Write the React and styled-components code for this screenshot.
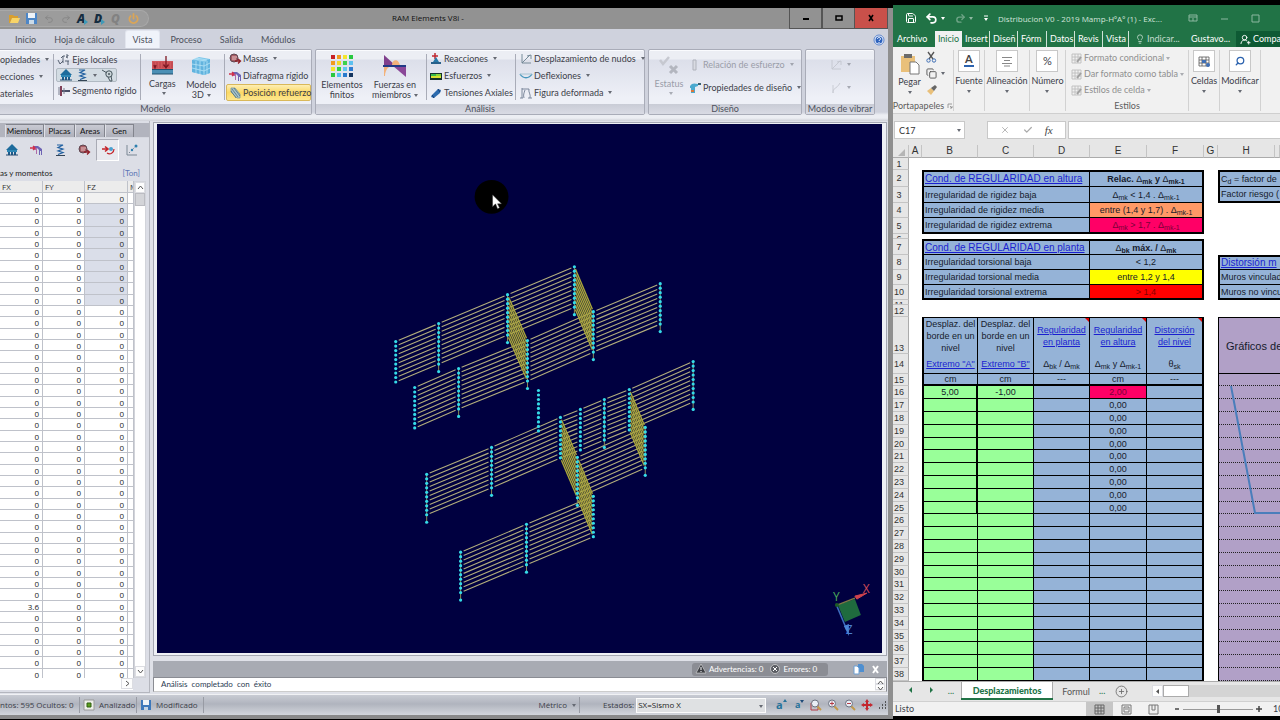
import React from 'react';
import styled, { createGlobalStyle, css } from 'styled-components';
import { Save, Undo2, Redo2, Copy, Search, Lightbulb, UserRoundPlus, X, Check, CirclePlus, Power } from 'lucide-react';

const Global = createGlobalStyle`
  *, *::before, *::after { box-sizing: border-box; }
  body { margin: 0; background: #000; color: #3c4049; font: 9px/10px Lato, "Open Sans", sans-serif; }
  button, input, select { font: inherit; color: inherit; margin: 0; padding: 0; border: 0; background: none; border-radius: 0; }
  svg { display: block; flex: none; }
  table { border-collapse: separate; border-spacing: 0; table-layout: fixed; }
  td, th { padding: 0; font-weight: 400; }
`;

const Desktop = styled.div`
  display: grid;
  grid-template-columns: minmax(0, 893fr) minmax(0, 387fr);
  height: 100vh;
  overflow: hidden;
`;

/* ---------- shared ---------- */

const Caret = styled.span`
  display: inline-block;
  flex: none;
  width: 0;
  height: 0;
  border: 2px solid transparent;
  border-top: 3px solid #666a73;
  border-bottom: 0;
  opacity: ${p => (p.$dim ? 0.5 : 1)};
`;

const Icon = ({ w = 12, h, box, children }) => (
  <svg width={w} height={h || w} viewBox={box || `0 0 ${w} ${h || w}`} overflow="visible" aria-hidden="true">{children}</svg>
);

/* ---------- RAM Elements window ---------- */

const RamWindow = styled.section`
  display: flex;
  flex-direction: column;
  min-width: 0;
  min-height: 0;
  margin: 8px 0 1px;
  background: #dfe1e8;
  border-right: 5px solid #8f8f8f;
  border-bottom: 4px solid #8a8a8a;
  overflow: hidden;
`;

const TitleBar = styled.header`
  display: flex;
  height: 21px;
  flex: none;
  background: #929292;
`;

const QuickAccess = styled.div`
  display: flex;
  align-items: center;
  gap: 6px;
  width: 149px;
  height: 17px;
  margin-top: 2px;
  padding-left: 9px;
  border: 1px solid #a8a8a8;
  border-left: 0;
  border-radius: 0 9px 9px 0;
  background: #9c9c9c;
`;

const QuickButton = styled.button`
  display: flex;
  align-items: center;
  justify-content: center;
  width: 11px;
  height: 12px;
  color: ${p => p.$color || '#848484'};
  font: italic 800 12px/12px "Open Sans", sans-serif;
`;

const WindowTitle = styled.h1`
  flex: 1;
  margin: 0;
  padding-right: 82px;
  text-align: center;
  color: #111;
  font: 400 8px/20px "Open Sans", sans-serif;
`;

const WindowButton = styled.button`
  display: grid;
  place-items: center;
  width: 33px;
  border: 1px solid #555;
  border-top: 0;
  border-left-width: ${p => (p.$close ? 0 : 1)}px;
  background: ${p => (p.$close ? '#c9504a' : '#929292')};
`;

const RamTabs = styled.nav`
  display: flex;
  align-items: stretch;
  gap: 4px;
  flex: none;
  height: 19px;
  padding: 2px 3px 0 8px;
  background: #cfd2dd;
`;

const RamTab = styled.button`
  padding: 0 7px;
  color: #4d515c;
  border-radius: 2px 2px 0 0;
  ${p => p.$active && css`
    background: #f0f3fa;
    box-shadow: 0 0 0 1px #e2e5ee;
  `}
`;

const HelpButton = styled.button`
  display: grid;
  place-items: center;
  margin-left: auto;
`;

const RamRibbon = styled.div`
  display: flex;
  gap: 3px;
  flex: none;
  height: 73px;
  padding-top: 1px;
  background: linear-gradient(#cfd2dd 0 64px, #eceef3 67px 70px, #cfd1d8 73px);
`;

const RibbonGroup = styled.section`
  display: flex;
  flex-direction: column;
  width: ${p => p.$w}px;
  height: 66px;
  border: 1px solid #a9acb8;
  border-left-width: ${p => (p.$first ? 0 : 1)}px;
  border-radius: ${p => (p.$first ? '0 2px 2px 0' : '2px')};
  background: linear-gradient(#eceef4 0 9px, #dcdfea 10px, #eef0f7 48px, #eef0f7);
  box-shadow: inset 0 1px #fafbfe;
`;

const GroupBody = styled.div`
  display: flex;
  height: 54px;
  padding-left: ${p => p.$pad || 0}px;
`;

const GroupCaption = styled.h2`
  margin: 0;
  flex: 1;
  text-align: center;
  font-size: 9px;
  font-weight: 400;
  line-height: 9px;
  color: #4d515c;
  background: linear-gradient(#c9ccd6, #d9dbe4);
`;

const Stack = styled.div`
  display: flex;
  flex-direction: column;
  justify-content: ${p => (p.$two ? 'space-evenly' : 'flex-start')};
  width: ${p => p.$w}px;
  height: 52px;
  ${p => p.$line && css`
    border-right: 1px solid #a9acb8;
    margin-right: ${p.$gap || 2}px;
    height: 46px;
    margin-top: 4px;
    & > * { position: relative; top: -3px; }
  `}
`;

const Command = styled.button`
  display: flex;
  align-items: center;
  gap: 2px;
  height: 17px;
  flex: none;
  padding-left: ${p => p.$pad || 0}px;
  white-space: nowrap;
  color: ${p => (p.$dim ? '#9a9da8' : '#3c4049')};
  ${Caret} { margin-left: 3px; }
  ${p => p.$active && css`
    border: 1px solid #d9b85a;
    border-radius: 2px;
    background: linear-gradient(#fdeeb4, #fbd966 50%, #fde78e);
  `}
`;

const ToggleStrip = styled.div`
  display: flex;
  align-items: center;
  justify-content: space-around;
  align-self: flex-start;
  width: 61px;
  height: 17px;
  border: 1px solid #b0b9c2;
  border-radius: 2px;
  background: #d3dce3;
`;

const IconButton = styled.button`
  display: grid;
  place-items: center;
  flex: none;
`;

const BigCommand = styled.button`
  display: flex;
  flex-direction: column;
  align-items: center;
  width: ${p => p.$w}px;
  height: 52px;
  padding-top: 5px;
  text-align: center;
  color: ${p => (p.$dim ? '#9a9da8' : '#3c4049')};
  svg { margin-bottom: 3px; }
  ${Caret} { margin: 3px 0 1px 3px; }
`;

const Workspace = styled.div`
  display: grid;
  grid-template-columns: 150px minmax(0, 1fr);
  flex: 1;
  min-height: 0;
`;

const SidePanel = styled.aside`
  display: flex;
  flex-direction: column;
  min-height: 0;
  padding-top: 2px;
  margin-bottom: 1px;
  border-right: 1px solid #b4b6be;
  border-bottom: 1px solid #b4b6be;
  background: #dcdee6;
`;

const SideTabs = styled.div`
  display: flex;
  align-items: flex-end;
  height: 15px;
  flex: none;
  padding-left: 5px;
  background: #b2b4be;
  border-bottom: 1px solid #d5d7df;
  font-size: 8px;
`;

const SideTab = styled.button`
  flex: none;
  width: ${p => p.$w}px;
  height: 13px;
  color: #111;
  border: 1px solid #82848d;
  border-left-color: #e0e1e8;
  border-bottom: 0;
  background: linear-gradient(#c9cad3, #aeb0ba);
`;

const SideTools = styled.div`
  display: flex;
  align-items: center;
  gap: 1px;
  height: 24px;
  flex: none;
`;

const SideTool = styled(IconButton)`
  width: 23px;
  height: 22px;
  ${p => p.$active && css`
    border: 1px solid #a9abb5;
    border-right-color: #fff;
    border-bottom-color: #fff;
    background: #e8e9ef;
  `}
`;

const SideCaption = styled.div`
  display: flex;
  justify-content: space-between;
  height: 19px;
  flex: none;
  padding: 6px 9px 0 0;
  font-size: 8px;
  color: #222;
  span + span { color: #5b74b5; }
`;

const GridArea = styled.div`
  display: flex;
  flex: 1;
  min-height: 0;
  margin-right: 3px;
  background: #fff;
`;

const GridClip = styled.div`
  flex: 1;
  min-width: 0;
  overflow: hidden;
`;

const ForceTable = styled.table`
  width: 100%;
  font-family: "Open Sans", sans-serif;
  font-size: 8px;
  th { height: 12px; padding-left: 2px; text-align: left; background: #ececec; color: #333; line-height: 9px; overflow: hidden; }
  td { height: 11px; padding-right: 3px; text-align: right; color: #222; line-height: 9px; }
  tr:nth-child(3n) td { height: 12px; }
  th, td { border-right: 1px solid #bfc2ca; border-bottom: 1px solid #bfc2ca; }
`;

const ForceCell = styled.td`
  background: ${p => (p.$shade === 2 ? '#dadee9' : p.$shade === 1 ? '#f1f1f1' : '#fff')};
`;

const VScroll = styled.div`
  display: flex;
  flex-direction: column;
  width: 12px;
  border: 1px solid #d2d4da;
  background: #fff;
  button:last-child { margin-top: auto; }
`;

const ScrollButton = styled.button`
  display: grid;
  place-items: center;
  width: ${p => p.$w || 10}px;
  height: ${p => p.$h || 11}px;
  border: 1px solid #dcdde2;
  background: #fdfdfd;
`;

const ScrollThumb = styled.div`
  height: 13px;
  background: #d3d4d8;
  border: 1px solid #bbbcc2;
`;

const HScroll = styled.div`
  display: flex;
  justify-content: flex-end;
  height: 12px;
  flex: none;
  margin: 0 16px 2px 0;
  background: #fff;
`;

const MainPanel = styled.main`
  display: flex;
  flex-direction: column;
  min-height: 0;
  padding: 1px 1px 2px 3px;
`;

const CanvasFrame = styled.div`
  flex: 1;
  min-height: 0;
  padding: 1px 4px 2px 3px;
  border: 1px solid #a5a8b2;
  background: #eef0f5;
`;

const ModelCanvas = styled.svg`
  width: 100%;
  height: 100%;
  background: #000040;
`;

const MessageBar = styled.div`
  display: flex;
  align-items: center;
  flex: none;
  height: 16px;
  margin-top: 5px;
  padding-right: 6px;
  background: #a8abb3;
  color: #fff;
  font-size: 8px;
`;

const Counters = styled.div`
  display: flex;
  align-items: center;
  gap: 3px;
  width: 136px;
  height: 13px;
  margin: 0 19px 0 auto;
  padding-left: 4px;
  border-radius: 3px;
  background: #8b8d94;
  white-space: nowrap;
  span { margin-right: 4px; }
`;

const BarButton = styled(IconButton)`
  margin-left: 6px;
`;

const MessageLog = styled.div`
  display: flex;
  justify-content: space-between;
  flex: none;
  height: 15px;
  padding-left: 7px;
  border: 1px solid #8a8c93;
  border-bottom-color: #ccc;
  background: #fff;
  color: #2c3c52;
  font-size: 8px;
  line-height: 13px;
`;

const Spinner = styled.div`
  width: 11px;
  background: #f2f2f4;
`;

const StatusBar = styled.footer`
  display: flex;
  align-items: center;
  flex: none;
  height: 21px;
  border-top: 1px solid #f0f1f4;
  background: linear-gradient(#c8cbd3, #b0b4be 45%, #d3d6dc);
  font: 8px/10px "Open Sans", sans-serif;
`;

const StatusItem = styled.div`
  display: flex;
  align-items: center;
  justify-content: ${p => (p.$end ? 'flex-end' : 'flex-start')};
  gap: 5px;
  height: 16px;
  width: ${p => p.$w}px;
  padding: 0 ${p => (p.$end ? 3 : 0)}px 0 ${p => p.$pad || 0}px;
  border-right: 1px solid #989ba4;
  white-space: nowrap;
`;

const StateField = styled.label`
  display: flex;
  align-items: center;
  gap: 2px;
  padding-left: 23px;
`;

const StateSelect = styled.select`
  width: 130px;
  height: 15px;
  padding: 0 1px;
  border: 1px solid #fbfbfb;
  background: #dfe1e3;
  color: #222;
  appearance: none;
`;

const SelectWrap = styled.span`
  position: relative;
  display: flex;
  ${Caret} { position: absolute; right: 3px; top: 7px; }
`;

const ViewTools = styled.div`
  display: flex;
  align-items: center;
  gap: 5px;
  margin-left: auto;
  padding-right: 1px;
`;

/* ---------- RAM icons ---------- */

const House = () => (
  <Icon w={12}><path d="M6 0 12 6H0Z" fill="#1d6b9c" /><path d="M1 6h10v2H1z" fill="#2d87b5" /><path d="M2 8h2v3H2zM5 8h2v3H5zM8 8h2v3H8z" fill="#1c5c8c" /><path d="M0 11h12" stroke="#244a70" /></Icon>
);
const Spring = () => (
  <Icon w={12}><path d="M3 1h6L4 3.500 9 5 4 7l5 1.500L4 10.500" fill="none" stroke="#1f5fa0" strokeWidth="1.200" /><path d="M2 11.500h9" stroke="#345" /></Icon>
);
const Pin = () => (
  <Icon w={12}><circle cx="7" cy="5" r="3.200" fill="#c9d4d8" stroke="#47565e" /><circle cx="7" cy="5" r="1" fill="#47565e" /><path d="m0 1 5 3M9 7l1 5M6 8l2 4h2" fill="none" stroke="#47565e" /></Icon>
);
const Axes = () => (
  <Icon w={12}><path d="m0 6 2 4 3-3M5 9V2h2M5 2 3 4M8 1h2v1L8 3l2 1M7 7h4M10 7v4" stroke="#4b5566" fill="none" strokeWidth=".9" /></Icon>
);
const Segment = () => (
  <Icon w={12}><path d="M3 1v10" stroke="#803f58" strokeWidth="2" /><path d="M4 6h8" stroke="#4b5068" strokeWidth="2" /><path d="M1 2v8M6 3v6" stroke="#7a7f90" /></Icon>
);
const Mass = () => (
  <Icon w={12}><circle cx="5" cy="5" r="4" fill="#a65c64" stroke="#5d4650" /><path d="M3 4h5M3 6h4" stroke="#e9c5c5" /><path d="M6 8h5M9 6l2.500 2L9 10.500" fill="none" stroke="#8f1f28" strokeWidth="1.300" /></Icon>
);
const Diaphragm = () => (
  <Icon w={12}><path d="M3 2h5l4 3v6h-1V7h-1v4H9V6L7 4H3z" fill="#6d63b4" /><path d="M3 4h4v6H6V6H3z" fill="#b06aa8" /><path d="M0 4h5M3 2l2 2-2 2" fill="none" stroke="#d1304a" strokeWidth="1.300" /></Icon>
);
const Rebar = () => (
  <Icon w={12}><path d="M2 1 6 1 11 7v4H8L2 5Z" fill="#a8c4cc" stroke="#6f8e96" strokeWidth=".7" /><path d="m3 2 6 8M5 1l6 8M2 4l5 7" stroke="#50727e" strokeWidth=".8" /></Icon>
);
const LoadsBig = () => (
  <Icon w={23} h={21}><rect x="1" y="6" width="21" height="8" fill="#d2575c" /><path d="M3 7v6M6 7v6M9 7v6M12 7v6M18 7v6M21 7v6" stroke="#b03a45" strokeWidth=".8" /><path d="M15 1v11M12.500 9.500 15 13l2.500-3.500M3 10l1 3 1-3" stroke="#7d1722" strokeWidth="1.300" fill="none" /><rect x="1" y="14" width="21" height="5" fill="#4b8fb5" /><path d="M1 14.500h21M1 19h21" stroke="#22506e" /></Icon>
);
const ModelBig = () => (
  <Icon w={22} h={22}><path d="m2 5 7-3 11 2v14l-6 2-12-3Z" fill="#7fc7ea" /><path d="m2 5 12 2 6-3v14l-6 2-12-3Z" fill="#62b3de" /><path d="M14 7v13M6 6v12M10 6v13M17 6v13M2 9l12 2 6-3M2 13l12 3 6-3M6 3l11 2M4 4l12 2" stroke="#b7e5f8" strokeWidth=".8" fill="none" /></Icon>
);
const tileColors = ['#c71f24', '#f19a20', '#f4e52b', '#28c840', '#f19a20', '#f4d92b', '#3ed14a', '#5cc0f0', '#f4e52b', '#35d043', '#63c6ee', '#2f7bd0', '#2cc840', '#58bdf0', '#2879cc', '#13345f'];
const TilesBig = () => (
  <Icon w={22} h={22}>{tileColors.map((c, i) => <rect key={i} x={(i % 4) * 6} y={Math.floor(i / 4) * 6} width="4" height="4" fill={c} />)}</Icon>
);
const ForcesBig = () => (
  <Icon w={24} h={22}><path d="M1 0v11h12Z" fill="#7f3f8c" /><path d="M23 22V11H10Z" fill="#8a4798" /><path d="M9 10c0-6 7-7 8 1H9Z" fill="#f3b27a" /><path d="M1 12h5c-3 2-4 6-4 9H1Z" fill="#f3b27a" /><path d="M0 11h23" stroke="#213a86" strokeWidth="2" /></Icon>
);
const Reactions = () => (
  <Icon w={12}><path d="M5 0v6M2 3h6" stroke="#c0282f" strokeWidth="1.500" /><path d="m6 4 3 5H3Z" fill="#2778a8" /><path d="M1 10h10" stroke="#27608a" strokeWidth="2" /></Icon>
);
const Stress = () => (
  <Icon w={12}><rect y="3" width="12" height="7" fill="#15302a" /><path d="M1 4h10v2H1z" fill="#37b94a" /><path d="M1 6h10v2H1z" fill="#d9e02f" /><path d="M6 4h5v2H6z" fill="#8ad63a" /></Icon>
);
const Axial = () => (
  <Icon w={12}><path d="m2 8 6-6 3 1-1 3-6 5-3-1Z" fill="#2c6bae" /><path d="m2 8 2 3M8 2l2 3" stroke="#153d73" /></Icon>
);
const Displace = ({ c = '#6b8190' }) => (
  <Icon w={12}><path d="M2 1v9h9M2 10l8-8M7 3l4-1v4" fill="none" stroke={c} strokeWidth=".9" /></Icon>
);
const DisplaceDots = () => (
  <Icon w={12}><path d="M1 1v10h10" fill="none" stroke="#7b8794" /><path d="m3 9 6-6" stroke="#7b8794" strokeDasharray="1.500 1.500" /><circle cx="10" cy="2" r="1.500" fill="#2d7fae" /><circle cx="6" cy="6" r="1.200" fill="#2d7fae" /></Icon>
);
const Deflect = () => (
  <Icon w={12}><path d="M0 4c3 5 9 5 12 0" fill="none" stroke="#4797bd" strokeWidth="1.400" /><path d="M0 4h12" stroke="#a8c3d2" /></Icon>
);
const Deformed = () => (
  <Icon w={12}><path d="M2 1v10M2 2h7M9 2c-1 3 2 5 1 9M5 3c-1 3-2 5-1 8M0 11h3M8 11h4" fill="none" stroke="#6f7d92" strokeWidth=".9" /></Icon>
);
const StatusBig = () => (
  <Icon w={22} h={21}><path d="m2 5 3 4 6-7" fill="none" stroke="#c6c8d0" strokeWidth="2.500" /><path d="m12 11 7 7m0-7-7 7" stroke="#b3b6bf" strokeWidth="3" /></Icon>
);
const Ratio = () => <Icon w={12}><path d="M4 1h3v10H4z" fill="#d9dbe2" stroke="#b0b3bc" /></Icon>;
const Drill = () => (
  <Icon w={12}><path d="M1 4c2-3 4-3 8-2v2L6 5v6H2V6H1Z" fill="#4aa9cf" /><path d="M9 1h3v2H9z" fill="#3b6070" /><path d="M2 8h3v2H2z" fill="#d9773b" /></Icon>
);
const ForceArrow = () => (
  <Icon w={14} h={12}><path d="M1 5h5M4 2.500 7 5 4 7.500" fill="none" stroke="#c4252b" strokeWidth="1.600" /><circle cx="10" cy="5" r="2" fill="#4aa0cf" /><path d="M6 9c3 2 7 0 7-4" fill="none" stroke="#c4252b" strokeWidth="1.200" /></Icon>
);
const Chevron = ({ d }) => <Icon w={7}><path d={d} fill="none" stroke="#555" strokeWidth="1" /></Icon>;
const UP = 'M1 5 3.500 2 6 5';
const DOWN = 'M1 2 3.500 5 6 2';
const RIGHT = 'M2 1 5 3.500 2 6';
const Magnifier = ({ sign, box }) => (
  <Icon w={12}>{box && <path d="M1 4h7v7H1z" fill="none" stroke="#b53a45" />}<path d="m7 7 4 4" stroke="#c39a4a" strokeWidth="2" /><circle cx="5" cy="4.500" r="3.500" fill="#e9eef5" stroke="#6d7280" />{sign && <path d={sign} stroke="#b53a45" />}</Icon>
);

/* ---------- 3D model ---------- */

const STEP = 4.5;
const columns = {
  A: [239, 218, 0], B: [282, 200, 1], C: [351, 171, 1], D: [418, 143, 1], E: [258, 264, 0], F: [302, 245, 1],
  G: [371, 217, 1], H: [437, 188, 1], I: [504, 160, 1], J: [382, 267, 0], K: [270, 351, 1], L: [335, 324, 1],
  M: [404, 294, 0], N: [424, 286, 0], O: [448, 276, 1], P: [473, 266, 0], Q: [537, 238, 1], R: [489, 304, 1],
  S: [421, 334, 1], T: [437, 373, 0], U: [370, 401, 1], V: [304, 429, 1],
};
const walls = ['AB', 'BC', 'CD', 'EF', 'FG', 'GH', 'HI', 'KL', 'LM', 'MN', 'NO', 'OP', 'PQ', 'SR', 'VU', 'UT'];
const crossWalls = ['CG', 'DH', 'MS', 'ST', 'PR'];
const levels = [...Array(10).keys()];

const Wall = ({ pair, inset, color, width }) => {
  const [a, b] = [columns[pair[0]], columns[pair[1]]];
  const slope = (b[1] - a[1]) / (b[0] - a[0]);
  return levels.map(i => (
    <line key={i} x1={a[0] + inset} y1={a[1] + i * STEP + slope * inset} x2={b[0] - inset} y2={b[1] + i * STEP - slope * inset} stroke={color} strokeWidth={width} />
  ));
};

const Model = () => (
  <ModelCanvas viewBox="0 0 726 530" role="img" aria-label="Modelo 3D">
    {walls.map(w => <Wall key={w} pair={w} inset={3} color="#b3ae7c" width={1.1} />)}
    {crossWalls.map(w => <Wall key={w} pair={w} inset={1} color="#aaa63a" width={1.4} />)}
    {Object.entries(columns).map(([k, [x, y, long]]) => (
      <g key={k} fill="#35dbe8">
        {long === 1 && <path d={`M${x} ${y}v47`} stroke="#8a8a58" />}
        {levels.map(i => <circle key={i} cx={x} cy={y + i * STEP} r="1.600" />)}
        {long === 1 && <circle cx={x} cy={y + 48} r="1.600" />}
      </g>
    ))}
    <circle cx="335" cy="73" r="17" fill="#000" />
    <path d="M336 71v12l3-3 2 5 2-1-2-4h4Z" fill="#fff" stroke="#333" strokeWidth=".5" />
    <path d="m682 482 17-6 6 16-16 7Z" fill="#1f6b3e" />
    <path d="m681 482 18-7" stroke="#7d7a45" strokeWidth="1.500" />
    <path d="m699 473 12-3-10 6Z" fill="#d0434d" stroke="#d0434d" />
    <path d="m681 483 10 24" stroke="#3e6fc0" strokeWidth="1.500" />
    <path d="m688 503 5-2v12Z" fill="#4a86d8" />
    <circle cx="681" cy="482" r="2" fill="#1d5a26" />
    <g fontFamily="Open Sans, sans-serif" fontSize="12">
      <text x="707" y="470" fill="#cf4a58">X</text>
      <text x="677" y="478" fill="#4cae5a">Y</text>
      <text x="690" y="511" fill="#4a7fd0">Z</text>
    </g>
  </ModelCanvas>
);

const ForceGrid = () => (
  <ForceTable>
    <colgroup><col style={{ width: 43 }} /><col style={{ width: 42 }} /><col style={{ width: 43 }} /><col /></colgroup>
    <thead><tr><th>FX</th><th>FY</th><th>FZ</th><th>M</th></tr></thead>
    <tbody>
      {[...Array(43).keys()].map(i => (
        <tr key={i}>
          <ForceCell>{i === 36 ? '3.6' : '0'}</ForceCell>
          <ForceCell>0</ForceCell>
          <ForceCell $shade={i === 0 ? 1 : i < 10 ? 2 : 0}>0</ForceCell>
          <ForceCell />
        </tr>
      ))}
    </tbody>
  </ForceTable>
);

const Play = () => <path d="m7 6 4 3-4 3Z" fill="#3f9ab8" />;

const Ram = () => (
  <RamWindow>
    <TitleBar>
      <QuickAccess>
        <QuickButton aria-label="Abrir"><Icon w={11}><path d="M0 2h4l1 1h4v2H3L1 10H0Z" fill="#d99f2e" /><path d="M3 5h8L9 10H1Z" fill="#f7d468" /></Icon></QuickButton>
        <QuickButton aria-label="Guardar"><Icon w={11}><path d="M0 0h11v11H0z" fill="#4d86c6" /><path d="M2 0h7v5H2z" fill="#eef3f8" /><path d="M3 7h5v4H3z" fill="#cbdbe9" /></Icon></QuickButton>
        <QuickButton aria-label="Deshacer"><Undo2 size={10} /></QuickButton>
        <QuickButton aria-label="Rehacer"><Redo2 size={10} /></QuickButton>
        <QuickButton aria-label="Analizar"><Icon w={12}><text x="0" y="10" fontSize="12" fill="#152c40">A</text><Play /></Icon></QuickButton>
        <QuickButton aria-label="Diseñar"><Icon w={12}><text x="0" y="10" fontSize="12" fill="#152c40">D</text><Play /></Icon></QuickButton>
        <QuickButton aria-label="Optimizar"><Icon w={12}><text x="0" y="10" fontSize="12" fill="#828282">Q</text></Icon></QuickButton>
        <QuickButton $color="#d9a558" aria-label="Salir"><Power size={11} strokeWidth={4} /></QuickButton>
      </QuickAccess>
      <WindowTitle>RAM Elements V8i -</WindowTitle>
      <WindowButton aria-label="Minimizar"><Icon w={8}><path d="M1 5h6" stroke="#000" strokeWidth="2" /></Icon></WindowButton>
      <WindowButton aria-label="Maximizar"><Icon w={8}><path d="M1 2h6v4H1z" fill="none" stroke="#000" strokeWidth="1.500" /></Icon></WindowButton>
      <WindowButton $close aria-label="Cerrar"><Icon w={8}><path d="m2 1 4 6M6 1 2 7" stroke="#000" strokeWidth="1.600" /></Icon></WindowButton>
    </TitleBar>

    <RamTabs>
      {['Inicio', 'Hoja de cálculo', 'Vista', 'Proceso', 'Salida', 'Módulos'].map(t => <RamTab key={t} $active={t === 'Vista'}>{t}</RamTab>)}
      <HelpButton aria-label="Ayuda"><Icon w={12}><circle cx="6" cy="6" r="5" fill="#e8effb" stroke="#5f86cc" /><circle cx="6" cy="6" r="3.500" fill="#2d62bd" /><path d="M4.500 5c0-2 3-2 3 0 0 1-1.500 1-1.500 2M6 8v1" stroke="#fff" fill="none" /></Icon></HelpButton>
    </RamTabs>

    <RamRibbon>
      <RibbonGroup $w={312} $first>
        <GroupBody>
          <Stack $w={55} $line>
            <Command>opiedades<Caret /></Command>
            <Command>ecciones<Caret /></Command>
            <Command>ateriales</Command>
          </Stack>
          <Stack $w={86} $line $gap={0}>
            <Command $pad={2}><Axes />Ejes locales</Command>
            <ToggleStrip>
              <IconButton aria-label="Apoyos"><House /></IconButton>
              <IconButton aria-label="Resortes"><Spring /></IconButton>
              <Caret />
              <IconButton aria-label="Articulaciones"><Pin /></IconButton>
            </ToggleStrip>
            <Command $pad={2}><Segment />Segmento rígido</Command>
          </Stack>
          <BigCommand $w={39}><LoadsBig />Cargas<Caret /></BigCommand>
          <BigCommand $w={40}><ModelBig />Modelo<span>3D<Caret /></span></BigCommand>
          <Stack $w={4} $line $gap={1} />
          <Stack $w={85}>
            <Command $pad={3}><Mass />Masas<Caret /></Command>
            <Command $pad={3}><Diaphragm />Diafragma rígido</Command>
            <Command $pad={2} $active><Rebar />Posición refuerzo</Command>
          </Stack>
        </GroupBody>
        <GroupCaption>Modelo</GroupCaption>
      </RibbonGroup>

      <RibbonGroup $w={330}>
        <GroupBody>
          <BigCommand $w={52}><TilesBig />Elementos<br />finitos</BigCommand>
          <BigCommand $w={54}><ForcesBig />Fuerzas en<span>miembros<Caret /></span></BigCommand>
          <Stack $w={5} $line $gap={3} />
          <Stack $w={85}>
            <Command><Reactions />Reacciones<Caret /></Command>
            <Command><Stress />Esfuerzos<Caret /></Command>
            <Command><Axial />Tensiones Axiales</Command>
          </Stack>
          <Stack $w={1} $line $gap={4} />
          <Stack $w={122}>
            <Command><Displace />Desplazamiento de nudos<Caret /></Command>
            <Command><Deflect />Deflexiones<Caret /></Command>
            <Command><Deformed />Figura deformada<Caret /></Command>
          </Stack>
        </GroupBody>
        <GroupCaption>Análisis</GroupCaption>
      </RibbonGroup>

      <RibbonGroup $w={154}>
        <GroupBody>
          <BigCommand $w={40} $dim><StatusBig />Estatus<Caret $dim /></BigCommand>
          <Stack $w={112} $two>
            <Command $dim><Ratio />Relación de esfuerzo<Caret $dim /></Command>
            <Command><Drill />Propiedades de diseño<Caret /></Command>
          </Stack>
        </GroupBody>
        <GroupCaption>Diseño</GroupCaption>
      </RibbonGroup>

      <RibbonGroup $w={70}>
        <GroupBody $pad={24}>
          <Stack $w={30} $two>
            <Command $dim aria-label="Modo"><Displace c="#c3c6cf" /><Caret $dim /></Command>
            <Command $dim aria-label="Animar"><Icon w={12}><path d="M3 11C3 5 6 8 10 1M3 3v8" fill="none" stroke="#c9ccd4" /></Icon><Caret $dim /></Command>
          </Stack>
        </GroupBody>
        <GroupCaption>Modos de vibrar</GroupCaption>
      </RibbonGroup>
    </RamRibbon>

    <Workspace>
      <SidePanel>
        <SideTabs>
          <SideTab $w={39}>Miembros</SideTab>
          <SideTab $w={31}>Placas</SideTab>
          <SideTab $w={30}>Areas</SideTab>
          <SideTab $w={29}>Gen</SideTab>
        </SideTabs>
        <SideTools>
          <SideTool aria-label="Apoyos"><House /></SideTool>
          <SideTool aria-label="Diafragma"><Diaphragm /></SideTool>
          <SideTool aria-label="Resortes"><Spring /></SideTool>
          <SideTool aria-label="Masas"><Mass /></SideTool>
          <SideTool $active aria-label="Fuerzas"><ForceArrow /></SideTool>
          <SideTool aria-label="Desplazamientos"><DisplaceDots /></SideTool>
        </SideTools>
        <SideCaption><span>as y momentos</span><span>[Ton]</span></SideCaption>
        <GridArea>
          <GridClip><ForceGrid /></GridClip>
          <VScroll>
            <ScrollButton aria-label="Subir"><Chevron d={UP} /></ScrollButton>
            <ScrollThumb />
            <ScrollButton aria-label="Bajar"><Chevron d={DOWN} /></ScrollButton>
          </VScroll>
        </GridArea>
        <HScroll><ScrollButton $w={12} aria-label="Derecha"><Chevron d={RIGHT} /></ScrollButton></HScroll>
      </SidePanel>

      <MainPanel>
        <CanvasFrame><Model /></CanvasFrame>
        <MessageBar>
          <Counters>
            <Icon w={10}><path d="m5 0 5 9H0Z" fill="#3d3f44" stroke="#ddd" strokeWidth=".6" /><path d="M5 3v3M5 7v1" stroke="#fff" /></Icon>
            <span>Advertencias: 0</span>
            <Icon w={10}><circle cx="5" cy="5" r="4.500" fill="#5b5d63" stroke="#ddd" strokeWidth=".7" /><path d="m3 3 4 4M7 3 3 7" stroke="#fff" /></Icon>
            <span>Errores: 0</span>
          </Counters>
          <BarButton aria-label="Copiar"><Icon w={11}><path d="M5 0h4l2 2v6H5z" fill="#4f8fd0" /><path d="M1 2h3l2 2v6H1z" fill="#fff" stroke="#6d9fd2" /></Icon></BarButton>
          <BarButton aria-label="Cerrar mensajes"><Icon w={11}><path d="m3 2 5 7M8 2 3 9" stroke="#fff" strokeWidth="2" /></Icon></BarButton>
        </MessageBar>
        <MessageLog>
          <span>Análisis&nbsp; completado&nbsp; con&nbsp; éxito</span>
          <Spinner><ScrollButton $h={6} aria-label="Anterior"><Chevron d={UP} /></ScrollButton><ScrollButton $h={6} aria-label="Siguiente"><Chevron d={DOWN} /></ScrollButton></Spinner>
        </MessageLog>
      </MainPanel>
    </Workspace>

    <StatusBar>
      <StatusItem $w={80}>ntos: 595 Ocultos: 0</StatusItem>
      <StatusItem $w={57} $pad={4}><Icon w={10}><path d="M0 0h10v10H0z" fill="#eef0e8" stroke="#999" /><path d="M3 3h4v4H3z" fill="#5d9e1e" stroke="#2f5e10" /></Icon>Analizado</StatusItem>
      <StatusItem $w={67} $pad={4}><Icon w={10}><path d="M0 0h10v10H0z" fill="#3d78bb" /><path d="M2 0h6v5H2z" fill="#edf2f8" /><path d="M3 7h4v3H3z" fill="#c4d4e5" /></Icon>Modificado</StatusItem>
      <StatusItem $w={376} $end>Métrico<Caret /></StatusItem>
      <StateField>Estados:
        <SelectWrap><StateSelect defaultValue="SX"><option value="SX">SX=Sismo X</option></StateSelect><Caret /></SelectWrap>
      </StateField>
      <ViewTools>
        <IconButton aria-label="Aumentar texto"><Icon w={12}><text x="0" y="10" fontSize="11" fontWeight="700" fill="#26729a">a</text><path d="m7 3 2-3 2 3Z" fill="#26729a" /></Icon></IconButton>
        <IconButton aria-label="Reducir texto"><Icon w={12}><text x="2" y="9" fontSize="9" fontWeight="700" fill="#26729a">a</text><path d="m7 1 2 3 2-3Z" fill="#1e4a78" /></Icon></IconButton>
        <IconButton aria-label="Zoom ventana"><Magnifier box /></IconButton>
        <IconButton aria-label="Acercar"><Magnifier sign="M3 4.500h4M5 2.500v4" /></IconButton>
        <IconButton aria-label="Alejar"><Magnifier sign="M3 4.500h4" /></IconButton>
        <IconButton aria-label="Mover"><Icon w={12}><path d="M6 0 8 3H7v2h2V4l3 2-3 2V7H7v2h1l-2 3-2-3h1V7H3v1L0 6l3-2v1h2V3H4Z" fill="#c3272f" /></Icon></IconButton>
        <Icon w={9}><path d="M7 1h1M7 4h1M4 4h1M7 7h1M4 7h1M1 7h1" stroke="#333" strokeWidth="1.500" /></Icon>
      </ViewTools>
    </StatusBar>
  </RamWindow>
);

/* ---------- Excel window ---------- */

const ExcelWindow = styled.section`
  display: flex;
  flex-direction: column;
  min-width: 0;
  min-height: 0;
  margin: 5px 0 4px;
  background: #e6e6e6;
  overflow: hidden;
`;

const ExcelTitle = styled.header`
  display: flex;
  align-items: center;
  height: 26px;
  flex: none;
  padding-left: 12px;
  background: #217346;
  color: #fff;
  ${Caret} { border-top-color: #fff; margin: 0 10px 0 3px; }
`;

const ExcelName = styled.h1`
  flex: none;
  width: 170px;
  margin: 2px 20px 0 9px;
  font: 400 8px/10px "Open Sans", sans-serif;
  white-space: nowrap;
  color: #d3e5db;
`;

const FrameButton = styled(IconButton)`
  margin-right: 22px;
  color: #8cb8a0;
`;

const ExcelTabs = styled.nav`
  display: flex;
  align-items: stretch;
  height: 16px;
  flex: none;
  background: #217346;
  color: #fff;
`;

const ExcelTab = styled.button`
  flex: none;
  width: ${p => p.$w}px;
  padding-left: ${p => (p.$active ? 0 : 4)}px;
  text-align: ${p => (p.$active ? 'center' : 'left')};
  white-space: nowrap;
  ${p => p.$line && css`border-right: 1px solid #cfe3d8; padding-left: 3px;`}
  ${p => p.$active && css`background: #f1f1f1; color: #217346;`}
`;

const TabAction = styled.button`
  display: flex;
  align-items: center;
  gap: 2px;
  flex: none;
  width: ${p => p.$w}px;
  padding-left: ${p => p.$pad || 0}px;
  white-space: nowrap;
  color: ${p => (p.$soft ? '#c4dccf' : '#fff')};
  background: ${p => (p.$dark ? '#0e5a34' : 'none')};
`;

const ExcelRibbon = styled.div`
  display: flex;
  flex: none;
  height: 67px;
  padding-top: 3px;
  border-bottom: 1px solid #cfcfcf;
  background: #f1f1f1;
`;

const ExcelGroup = styled.section`
  display: flex;
  flex-direction: column;
  align-items: center;
  flex: none;
  width: ${p => p.$w}px;
  height: 61px;
  border-right: 1px solid #d2d2d2;
`;

const TileButton = styled.button`
  display: flex;
  flex-direction: column;
  align-items: center;
  ${Caret} { margin-top: 4px; }
`;

const Tile = styled.span`
  display: grid;
  place-items: center;
  width: 22px;
  height: 22px;
  margin-bottom: 4px;
  border: 1px solid #c8c8c8;
  background: #fff;
  font-size: 11px;
`;

const Clipboard = styled.div`
  display: flex;
  width: 100%;
  height: 52px;
`;

const PasteButton = styled.button`
  display: flex;
  flex-direction: column;
  align-items: center;
  width: 33px;
  padding-top: 3px;
  svg { margin-bottom: 2px; }
  ${Caret} { margin-top: 4px; }
`;

const SmallColumn = styled.div`
  display: flex;
  flex-direction: column;
  justify-content: space-around;
  padding-bottom: 4px;
`;

const SmallTool = styled.button`
  display: flex;
  align-items: center;
  gap: 4px;
  color: #555;
`;

const GroupLabel = styled.span`
  display: flex;
  align-items: center;
  gap: 3px;
  margin-top: auto;
  height: 10px;
  color: #5d5d5d;
`;

const StyleButton = styled.button`
  display: flex;
  align-items: center;
  align-self: flex-start;
  gap: 2px;
  height: 16px;
  padding-left: 5px;
  white-space: nowrap;
  color: #8f8f8f;
`;

const FormulaBar = styled.div`
  display: flex;
  gap: 2px;
  flex: none;
  height: 31px;
  padding: 7px 0 0 1px;
`;

const NameBox = styled.label`
  position: relative;
  width: 71px;
  height: 18px;
  margin-right: 20px;
  ${Caret} { position: absolute; right: 4px; top: 8px; }
  input { width: 100%; height: 100%; padding-left: 4px; border: 1px solid #c8c8c8; background: #fff; color: #333; font-size: 9px; }
`;

const FormulaTools = styled.div`
  display: flex;
  align-items: center;
  justify-content: space-evenly;
  width: 79px;
  height: 18px;
  border: 1px solid #c8c8c8;
  background: #fff;
  color: #aaa;
  i { font: italic 11px/12px "Liberation Serif", serif; color: #444; }
`;

const FormulaInput = styled.input`
  flex: 1;
  min-width: 0;
  height: 18px;
  border: 1px solid #c8c8c8;
  border-right: 0;
  background: #fff;
`;

const SheetArea = styled.div`
  flex: 1;
  min-height: 0;
  overflow: hidden;
  background: #fff;
`;

const Sheet = styled.table`
  width: 100%;
  font: 9px/10px "Liberation Sans", Arial, sans-serif;
  color: #151b2c;
  td { white-space: nowrap; text-align: center; }
  sub { font-size: 7px; line-height: 0; vertical-align: -2px; }
  a { color: #1a1fd0; }
`;

const ColHead = styled.th`
  height: 13px;
  border-right: 1px solid #c4c4c4;
  border-bottom: 1px solid #ababab;
  background: #e6e6e6;
  color: #333;
  font-size: 10px;
`;

const SheetRow = styled.tr`
  height: ${p => p.$h}px;
`;

const RowHead = styled.th`
  vertical-align: ${p => (p.$h > 30 ? 'bottom' : 'middle')};
  border-right: 1px solid #ababab;
  border-bottom: 1px solid #c4c4c4;
  background: #e6e6e6;
  color: #333;
  text-align: center;
  div { max-height: ${p => p.$h - 1}px; padding-right: 3px; overflow: hidden; }
`;

const fills = { blue: '#95b3d7', green: '#99ff99', orange: '#ff9966', pink: '#ff0066', yellow: '#ffff00', red: '#ff0000', violet: '#b1a0c7' };

const Cell = styled.td`
  position: relative;
  background: ${p => fills[p.$fill]};
  border: 0 solid #000;
  border-top-width: ${p => p.$t || 0}px;
  border-left-width: ${p => p.$l || 0}px;
  border-right-width: ${p => (p.$r === undefined ? 1 : p.$r)}px;
  border-bottom-width: ${p => (p.$b === undefined ? 1 : p.$b)}px;
  ${p => p.$left && css`&& { text-align: left; padding-left: ${p.$indent || 1}px; overflow: hidden; }`}
  ${p => p.$size && css`font-size: ${p.$size}px;`}
  ${p => p.$bold && css`font-weight: 700;`}
  ${p => p.$dotted && css`border-bottom: 1px dotted #222;`}
  ${p => p.$tall && css`line-height: 12px;`}
  ${p => p.$dark && css`color: ${p.$dark};`}
`;

const Delta = styled.span`
  font-weight: 400;
`;

const Note = styled.i`
  position: absolute;
  top: 0;
  right: 0;
  border: 2px solid #e00000;
  border-left-color: transparent;
  border-bottom-color: transparent;
`;

const SeriesLine = styled.svg`
  position: absolute;
  top: 0;
  left: 0;
  z-index: 1;
  overflow: visible;
`;

const SheetTabs = styled.div`
  display: flex;
  align-items: flex-start;
  height: 20px;
  flex: none;
  padding-left: 8px;
  border-top: 1px solid #ababab;
  color: #217346;
  line-height: 17px;
`;

const SheetNav = styled.button`
  width: 20px;
  height: 17px;
  color: #217346;
`;

const SheetTab = styled.button`
  width: ${p => p.$w}px;
  height: 18px;
  white-space: nowrap;
  color: #555;
  ${p => p.$active && css`
    background: #fff;
    color: #217346;
    font-weight: 900;
    border-bottom: 2px solid #217346;
    box-shadow: inset 1px 0 #ababab, inset -1px 0 #ababab;
  `}
`;

const NewSheet = styled(IconButton)`
  margin: 3px 0 0 10px;
`;

const SheetScroll = styled.div`
  display: flex;
  flex: 1;
  height: 12px;
  margin: 3px 0 0 24px;
  background: #d4d4d4;
`;

const SheetThumb = styled.div`
  width: 26px;
  border: 1px solid #ababab;
  background: #fff;
`;

const ExcelStatus = styled.footer`
  display: flex;
  align-items: center;
  height: 15px;
  flex: none;
  padding-left: 2px;
  border-top: 1px solid #d0d0d0;
  background: #f1f1f1;
`;

const StatusText = styled.span`
  flex: 1;
`;

const ZoomValue = styled.span`
  width: 7px;
  margin-left: 11px;
  overflow: hidden;
`;

const ViewButton = styled(IconButton)`
  width: 27px;
  height: 14px;
  background: ${p => (p.$active ? '#c6c6c6' : 'none')};
`;

const ZoomOut = styled(IconButton)`
  margin-left: 7px;
`;

const Zoom = styled.input`
  width: 70px;
  height: 8px;
  margin: 0 3px;
  appearance: none;
  background: linear-gradient(#999, #999) center / 100% 1px no-repeat;
  &::-webkit-slider-thumb { appearance: none; width: 3px; height: 8px; background: #555; }
`;

const D = ({ s }) => <><Delta>Δ</Delta><sub>{s}</sub></>;

const heights = { 1: 12, 2: 17, 3: 16, 4: 15, 5: 16, 6: 5, 7: 16, 8: 15, 9: 15, 10: 15, 11: 5, 12: 12, 13: 37, 14: 20, 15: 12 };
const heightOf = n => heights[n] || ((n - 15) % 5 === 0 ? 12 : 13);

const Row = ({ n, children }) => (
  <SheetRow $h={heightOf(n)}>
    <RowHead $h={heightOf(n)}><div>{n}</div></RowHead>
    <td />
    {children}
  </SheetRow>
);

const Rule = ({ n, label, value, fill = 'blue', title, first, last, dark, children }) => (
  <Row n={n}>
    <Cell colSpan={3} $fill="blue" $left $l={2} $t={first ? 2 : 0} $b={last ? 2 : 1} $size={title ? 10 : 9}>
      {title ? <a href="#regularidad">{label}</a> : label}
    </Cell>
    <Cell colSpan={2} $fill={fill} $r={2} $t={first ? 2 : 0} $b={last ? 2 : 1} $bold={title} $dark={dark}>{value}</Cell>
    <td />
    {children || <><td /><td /></>}
  </Row>
);

const DataRow = ({ n }) => {
  const inRange = n <= 25;
  return (
    <Row n={n}>
      <Cell $fill="green" $l={2} $r={inRange ? 2 : 1}>{n === 16 && '5,00'}</Cell>
      <Cell $fill="green">{n === 16 && '-1,00'}</Cell>
      <Cell $fill="blue" />
      <Cell $fill={n === 16 ? 'pink' : 'blue'} $dark={n === 16 ? '#7a0038' : undefined}>{inRange && (n === 16 ? '2,00' : '0,00')}</Cell>
      <Cell $fill="blue" $r={2} />
      <td />
      <Cell colSpan={2} $fill="violet" $l={1} $r={0} $dotted>
        {n === 16 && <SeriesLine width="80" height="130" viewBox="0 0 80 130"><path d="m12 0 24 127h44" fill="none" stroke="#4a7ebb" strokeWidth="2" strokeLinejoin="round" /></SeriesLine>}
      </Cell>
    </Row>
  );
};

const Grid = () => (
  <Sheet>
    <colgroup>{[16, 13, 56, 56, 56, 57, 57, 14, 57].map((w, i) => <col key={i} style={{ width: w }} />)}<col /></colgroup>
    <thead>
      <tr>
        <ColHead><Icon w={14} h={11}><path d="M12 3v7H5Z" fill="#b5b5b5" /></Icon></ColHead>
        {['A', 'B', 'C', 'D', 'E', 'F', 'G', 'H', ''].map(c => <ColHead key={c}>{c}</ColHead>)}
      </tr>
    </thead>
    <tbody>
      <Row n={1}><td colSpan={8} /></Row>
      <Rule n={2} first title label="Cond. de REGULARIDAD en altura" value={<>Relac. <D s="mk" /> y <D s="mk-1" /></>}>
        <Cell colSpan={2} $fill="blue" $left $l={2} $t={2} $r={0}>C<sub>d</sub> = factor de</Cell>
      </Rule>
      <Rule n={3} label="Irregularidad de rigidez baja" value={<><D s="mk" /> &lt; 1,4 . <D s="mk-1" /></>}>
        <Cell colSpan={2} $fill="blue" $left $l={2} $b={2} $r={0}>Factor riesgo (</Cell>
      </Rule>
      <Rule n={4} label="Irregularidad de rigidez media" fill="orange" value={<>entre (1,4 y 1,7) . <D s="mk-1" /></>} />
      <Rule n={5} last label="Irregularidad de rigidez extrema" fill="pink" dark="#7a0038" value={<><D s="mk" /> &gt; 1,7 . <D s="mk-1" /></>} />
      <Row n={6}><td colSpan={8} /></Row>
      <Rule n={7} first title label="Cond. de REGULARIDAD en planta" value={<><D s="bk" /> máx. / <D s="mk" /></>} />
      <Rule n={8} label="Irregularidad torsional baja" value="< 1,2">
        <Cell colSpan={2} $fill="blue" $left $l={2} $t={2} $r={0} $size={10}><a href="#distorsion">Distorsión m</a></Cell>
      </Rule>
      <Rule n={9} label="Irregularidad torsional media" fill="yellow" value="entre 1,2 y 1,4">
        <Cell colSpan={2} $fill="blue" $left $l={2} $r={0}>Muros vinculad</Cell>
      </Rule>
      <Rule n={10} last label="Irregularidad torsional extrema" fill="red" dark="#860000" value="> 1,4">
        <Cell colSpan={2} $fill="blue" $left $l={2} $b={2} $r={0}>Muros no vincu</Cell>
      </Rule>
      <Row n={11}><td colSpan={8} /></Row>
      <Row n={12}><td colSpan={8} /></Row>
      <Row n={13}>
        <Cell $fill="blue" $l={2} $t={1} $b={0} $tall>Desplaz. del<br />borde en un<br />nivel</Cell>
        <Cell $fill="blue" $t={1} $b={0} $tall>Desplaz. del<br />borde en un<br />nivel</Cell>
        <Cell $fill="blue" $t={1} $b={0} $tall><Note /><a href="#planta">Regularidad<br />en planta</a></Cell>
        <Cell $fill="blue" $t={1} $b={0} $tall><Note /><a href="#altura">Regularidad<br />en altura</a></Cell>
        <Cell $fill="blue" $t={1} $b={0} $r={2} $tall><Note /><a href="#nivel">Distorsión<br />del nivel</a></Cell>
        <td />
        <Cell colSpan={2} rowSpan={2} $fill="violet" $left $indent={7} $l={1} $t={1} $r={0} $size={11}>Gráficos de</Cell>
      </Row>
      <Row n={14}>
        <Cell $fill="blue" $l={2}><a href="#a">Extremo "A"</a></Cell>
        <Cell $fill="blue"><a href="#b">Extremo "B"</a></Cell>
        <Cell $fill="blue"><D s="bk" /> / <D s="mk" /></Cell>
        <Cell $fill="blue"><D s="mk" /> y <D s="mk-1" /></Cell>
        <Cell $fill="blue" $r={2}>θ<sub>sk</sub></Cell>
        <td />
      </Row>
      <Row n={15}>
        <Cell $fill="blue" $l={2} $b={2}>cm</Cell>
        <Cell $fill="blue" $b={2}>cm</Cell>
        <Cell $fill="blue" $b={2}>---</Cell>
        <Cell $fill="blue" $b={2}>cm</Cell>
        <Cell $fill="blue" $b={2} $r={2}>---</Cell>
        <td />
        <Cell colSpan={2} $fill="violet" $l={1} $r={0} $dotted />
      </Row>
      {[...Array(24).keys()].map(i => <DataRow key={i} n={16 + i} />)}
    </tbody>
  </Sheet>
);

const TableGlyph = () => (
  <Icon w={11}><path d="M1 1h9v9H1zM1 4h9M1 7h9M4 1v9M7 1v9" fill="none" stroke="#bdbdbd" strokeWidth=".9" /><path d="m6 9 4-5" stroke="#a0a0a0" strokeWidth="2" /></Icon>
);

const UndoButton = styled(IconButton)`
  margin-left: 8px;
`;

const FadedButton = styled(IconButton)`
  opacity: 0.35;
`;

const MirroredSearch = styled(Search)`
  transform: scaleX(-1);
`;

const Excel = () => (
  <ExcelWindow>
    <ExcelTitle>
      <IconButton aria-label="Guardar"><Save size={12} /></IconButton>
      <UndoButton aria-label="Deshacer"><Undo2 size={13} strokeWidth={3} /></UndoButton><Caret />
      <FadedButton aria-label="Rehacer"><Redo2 size={11} strokeWidth={3} /></FadedButton><Caret $dim />
      <Icon w={6}><path d="M1 1h4" stroke="#fff" /><path d="M1 3h4L3 6Z" fill="#fff" /></Icon>
      <ExcelName>Distribucion V0 - 2019 Mamp-HºAº (1) - Exc...</ExcelName>
      <FrameButton aria-label="Opciones de cinta"><Icon w={10}><path d="M1 2h8v6H1zM1 4h8M5 5v3" fill="none" stroke="currentColor" /></Icon></FrameButton>
      <FrameButton aria-label="Minimizar"><Icon w={9}><path d="M1 5h7" stroke="currentColor" /></Icon></FrameButton>
      <FrameButton aria-label="Maximizar"><Icon w={9}><path d="M1 1h7v7H1z" fill="none" stroke="currentColor" /></Icon></FrameButton>
    </ExcelTitle>
    <ExcelTabs>
      <ExcelTab $w={42}>Archivo</ExcelTab>
      <ExcelTab $w={27} $active>Inicio</ExcelTab>
      <ExcelTab $w={28} $line>Insert</ExcelTab>
      <ExcelTab $w={28} $line>Diseñ</ExcelTab>
      <ExcelTab $w={29} $line>Fórm</ExcelTab>
      <ExcelTab $w={28} $line>Datos</ExcelTab>
      <ExcelTab $w={28} $line>Revis</ExcelTab>
      <ExcelTab $w={26} $line>Vista</ExcelTab>
      <TabAction $w={60} $pad={6} $soft><Lightbulb size={10} />Indicar...</TabAction>
      <TabAction $w={47} $pad={2}>Gustavo...</TabAction>
      <TabAction $w={60} $pad={4} $dark><UserRoundPlus size={11} />Compa</TabAction>
    </ExcelTabs>
    <ExcelRibbon>
      <ExcelGroup $w={61}>
        <Clipboard>
          <PasteButton>
            <Icon w={20} h={22}><path d="M1 3h14v16H1z" fill="#e9c07a" /><path d="M4 1h8v4H4z" fill="#6b6b6b" /><path d="M10 9h6l3 3v9h-9z" fill="#fff" stroke="#777" /></Icon>
            Pegar<Caret />
          </PasteButton>
          <SmallColumn>
            <SmallTool aria-label="Cortar"><Icon w={11}><path d="m2 0 5 7M8 0 3 7" stroke="#555" strokeWidth="1.300" /><circle cx="2.500" cy="8.500" r="1.700" fill="none" stroke="#3f6fb5" /><circle cx="8" cy="8.500" r="1.700" fill="none" stroke="#3f6fb5" /></Icon></SmallTool>
            <SmallTool aria-label="Copiar"><Copy size={11} /><Caret /></SmallTool>
            <SmallTool aria-label="Copiar formato"><Icon w={11}><path d="m1 7 4-3 3 3-3 4Z" fill="#e9c07a" /><path d="m5 4 4-3 2 2-3 4Z" fill="#666" /></Icon></SmallTool>
          </SmallColumn>
        </Clipboard>
        <GroupLabel>Portapapeles<Icon w={6}><path d="M1 5V1h4M3 3l2 2M5 3v2H3" fill="none" stroke="#888" strokeWidth=".8" /></Icon></GroupLabel>
      </ExcelGroup>
      <ExcelGroup $w={31}><TileButton><Tile><Icon w={14}><text x="3" y="9" fontSize="11" fontWeight="700" fill="#444">A</text><path d="M2 11h10v2H2z" fill="#2b62ae" /></Icon></Tile>Fuente<Caret /></TileButton></ExcelGroup>
      <ExcelGroup $w={45}><TileButton><Tile><Icon w={12}><path d="M1 2.500h10M3 5.500h6M1 8.500h10M3 11h6" stroke="#888" /></Icon></Tile>Alineación<Caret /></TileButton></ExcelGroup>
      <ExcelGroup $w={36}><TileButton><Tile>%</Tile>Número<Caret /></TileButton></ExcelGroup>
      <ExcelGroup $w={123}>
        <StyleButton><TableGlyph />Formato condicional<Caret $dim /></StyleButton>
        <StyleButton><TableGlyph />Dar formato como tabla<Caret $dim /></StyleButton>
        <StyleButton><TableGlyph />Estilos de celda<Caret $dim /></StyleButton>
        <GroupLabel>Estilos</GroupLabel>
      </ExcelGroup>
      <ExcelGroup $w={31}><TileButton><Tile><Icon w={13}><path d="M1 2h10v9H1zM1 5h10M1 8h10M4 2v9M8 2v9" fill="none" stroke="#555" strokeWidth=".8" /><path d="M4 5h4v3H4z" fill="#3f6fb5" /><circle cx="10" cy="10" r="2" fill="#3f6fb5" /></Icon></Tile>Celdas<Caret /></TileButton></ExcelGroup>
      <ExcelGroup $w={41}><TileButton><Tile><MirroredSearch size={10} color="#2b62ae" strokeWidth={3} /></Tile>Modificar<Caret /></TileButton></ExcelGroup>
    </ExcelRibbon>
    <FormulaBar>
      <NameBox><input aria-label="Cuadro de nombres" defaultValue="C17" /><Caret /></NameBox>
      <FormulaTools><X size={10} /><Check size={10} strokeWidth={3} /><i>fx</i></FormulaTools>
      <FormulaInput aria-label="Barra de fórmulas" />
    </FormulaBar>
    <SheetArea><Grid /></SheetArea>
    <SheetTabs>
      <SheetNav aria-label="Hoja anterior"><Icon w={20} h={9}><path d="M11 1v6L8 4Z" fill="#217346" /></Icon></SheetNav>
      <SheetNav aria-label="Hoja siguiente"><Icon w={20} h={9}><path d="M9 1v6l3-3Z" fill="#217346" /></Icon></SheetNav>
      <SheetNav>...</SheetNav>
      <SheetTab $w={92} $active>Desplazamientos</SheetTab>
      <SheetTab $w={46}>Formul</SheetTab>
      <span>...</span>
      <NewSheet aria-label="Hoja nueva"><CirclePlus size={13} color="#666" strokeWidth={1.5} /></NewSheet>
      <SheetScroll>
        <ScrollButton $w={11} $h={12} aria-label="Izquierda"><Icon w={5}><path d="M4 0v5L1 2.500Z" fill="#555" /></Icon></ScrollButton>
        <SheetThumb />
      </SheetScroll>
    </SheetTabs>
    <ExcelStatus>
      <StatusText>Listo</StatusText>
      <ViewButton $active aria-label="Normal"><Icon w={11}><path d="M1 1h9v9H1zM1 4h9M1 7h9M4 1v9M7 1v9" fill="none" stroke="#666" /></Icon></ViewButton>
      <ViewButton aria-label="Diseño de página"><Icon w={11}><path d="M1 1h9v9H1zM3 3h5v5H3zM4 5h3" fill="none" stroke="#777" /></Icon></ViewButton>
      <ViewButton aria-label="Salto de página"><Icon w={11}><path d="M1 1h9v9H1zM4 1v5h3V1" fill="none" stroke="#777" /></Icon></ViewButton>
      <ZoomOut aria-label="Reducir"><Icon w={6}><path d="M1 3h4" stroke="#444" strokeWidth="1.500" /></Icon></ZoomOut>
      <Zoom type="range" aria-label="Zoom" />
      <IconButton aria-label="Ampliar"><Icon w={6}><path d="M0 3h6M3 0v6" stroke="#444" strokeWidth="1.500" /></Icon></IconButton>
      <ZoomValue>10</ZoomValue>
    </ExcelStatus>
  </ExcelWindow>
);

export default function App() {
  return (
    <>
      <Global />
      <Desktop>
        <Ram />
        <Excel />
      </Desktop>
    </>
  );
}
